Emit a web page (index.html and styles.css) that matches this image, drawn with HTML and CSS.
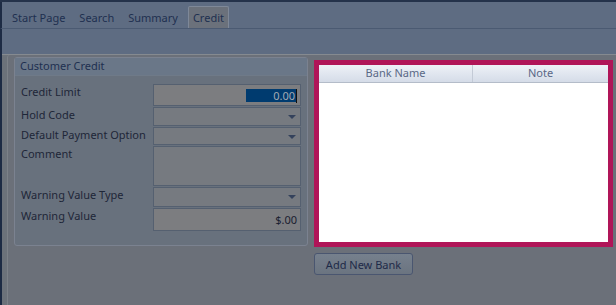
FILE: index.html
```html
<!DOCTYPE html>
<html lang="en">
<head>
    <meta charset="UTF-8">
    <title>Customer Credit</title>
    <link rel="stylesheet" href="styles.css">
</head>
<body>
    <div class="topline"></div>
    <div class="tabs">
        <span class="tab">Start Page</span>
        <span class="tab">Search</span>
        <span class="tab">Summary</span>
        <span class="tab active">Credit</span>
    </div>
    <div class="tab-body">
        <div class="strip"></div>
        <div class="panel">
            <div class="panel-inner">
                <div class="group">
                    <div class="group-title">Customer Credit</div>
                    <div class="fields">
                        <label>Credit Limit</label>
                        <div class="box value"><span class="selected">0.00</span><span class="caret"></span></div>

                        <label>Hold Code</label>
                        <div class="box combo"><span class="arrow"></span></div>

                        <label>Default Payment Option</label>
                        <div class="box combo"><span class="arrow"></span></div>

                        <label>Comment</label>
                        <div class="box"></div>

                        <label>Warning Value Type</label>
                        <div class="box combo"><span class="arrow"></span></div>

                        <label>Warning Value</label>
                        <div class="box value money">$.00</div>
                    </div>
                </div>
                <div class="side">
                    <div class="grid">
                        <div class="grid-head">
                            <div class="col">Bank Name</div>
                            <div class="col">Note</div>
                        </div>
                        <div class="grid-rows"></div>
                    </div>
                    <button class="add-bank">Add New Bank</button>
                </div>
            </div>
        </div>
    </div>
</body>
</html>
```

FILE: styles.css
```css
body {
    margin: 0;
    font-family: 'Noto Sans', 'Open Sans', sans-serif;
    font-size: 11px;
    background-color: #6b7079;
    color: #1e2c48;
    height: 305px;
    overflow: hidden;
}
.topline {
    height: 2px;
    background-color: #24324a;
}
.tabs {
    display: flex;
    align-items: flex-end;
    height: 26px;
    padding-left: 3px;
    background-color: #5e6c82;
    border-bottom: 1px solid #4b5a72;
    border-left: 2px solid #1d2b44;
}
.tab {
    height: 21px;
    line-height: 21px;
    padding: 0 7px;
    color: #1e3050;
}
.tab.active {
    margin-left: 3px;
    padding: 0 4px;
    background-color: #6b717b;
    border: 1px solid #7e8898;
    border-bottom: none;
    border-radius: 2px 2px 0 0;
}
.tab-body {
    border-left: 2px solid #1d2b44;
}
.strip {
    height: 25px;
    background-color: #5e6c82;
}
.panel {
    border-top: 1px solid #858a90;
    padding-left: 5px;
    background-color: #6c727a;
    height: 260px;
}
.panel-inner {
    display: flex;
    gap: 6px;
    height: 100%;
    padding: 2px 0 0 6px;
    border-left: 1px solid #7c8188;
    border-top-left-radius: 3px;
    background-color: #6b7079;
}
.group {
    width: 292px;
    height: 187px;
    border: 1px solid #7b8290;
    border-radius: 3px;
    background-color: #68717d;
}
.group-title {
    height: 17px;
    line-height: 16px;
    padding-left: 5px;
    background-color: #6a7788;
    color: #1e3050;
    border-bottom: 1px solid #6f7a88;
}
.fields {
    display: grid;
    grid-template-columns: 132px 148px;
    grid-template-rows: 22px 19px 18px 40px 20px 23px;
    row-gap: 1px;
    padding: 8px 6px 0 6px;
}
.fields label {
    line-height: 15px;
    color: #1e2638;
}
.box {
    position: relative;
    box-sizing: border-box;
    border: 1px solid #556070;
    background-color: #767a80;
}
.value {
    background-color: #7c7d80;
    text-align: right;
    padding-right: 4px;
}
.selected {
    display: inline-block;
    width: 50px;
    height: 13px;
    margin-top: 4px;
    line-height: 13px;
    padding-right: 1px;
    box-sizing: border-box;
    background-color: #003b6f;
    color: #a3aab3;
}
.caret {
    position: absolute;
    right: 3px;
    top: 4px;
    width: 1px;
    height: 14px;
    background-color: #101010;
}
.money {
    line-height: 21px;
    padding-right: 3px;
    color: #1a2030;
}
.arrow {
    position: absolute;
    right: 4px;
    top: 7px;
    width: 0;
    height: 0;
    border-left: 4px solid transparent;
    border-right: 4px solid transparent;
    border-top: 4px solid #34425c;
}
.side {
    display: flex;
    flex-direction: column;
    align-items: flex-start;
    padding-top: 3px;
}
.grid {
    width: 289px;
    height: 177px;
    border: 5px solid #b01558;
    background-color: #ffffff;
}
.grid-head {
    display: flex;
    height: 17px;
    background: linear-gradient(#edf1f7, #d5dce8);
    border-bottom: 1px solid #b4bcc9;
}
.col {
    line-height: 16px;
    text-align: center;
    color: #5a6886;
    font-size: 11px;
}
.col:first-child {
    width: 153px;
    border-right: 1px solid #c3cad6;
}
.col:last-child {
    flex: 1;
}
.add-bank {
    margin-top: 6px;
    width: 99px;
    height: 22px;
    padding: 0;
    font-family: inherit;
    font-size: 11px;
    color: #1e2a48;
    background: linear-gradient(#76808d, #6b7480);
    border: 1px solid #4a5670;
    border-radius: 3px;
}
```
